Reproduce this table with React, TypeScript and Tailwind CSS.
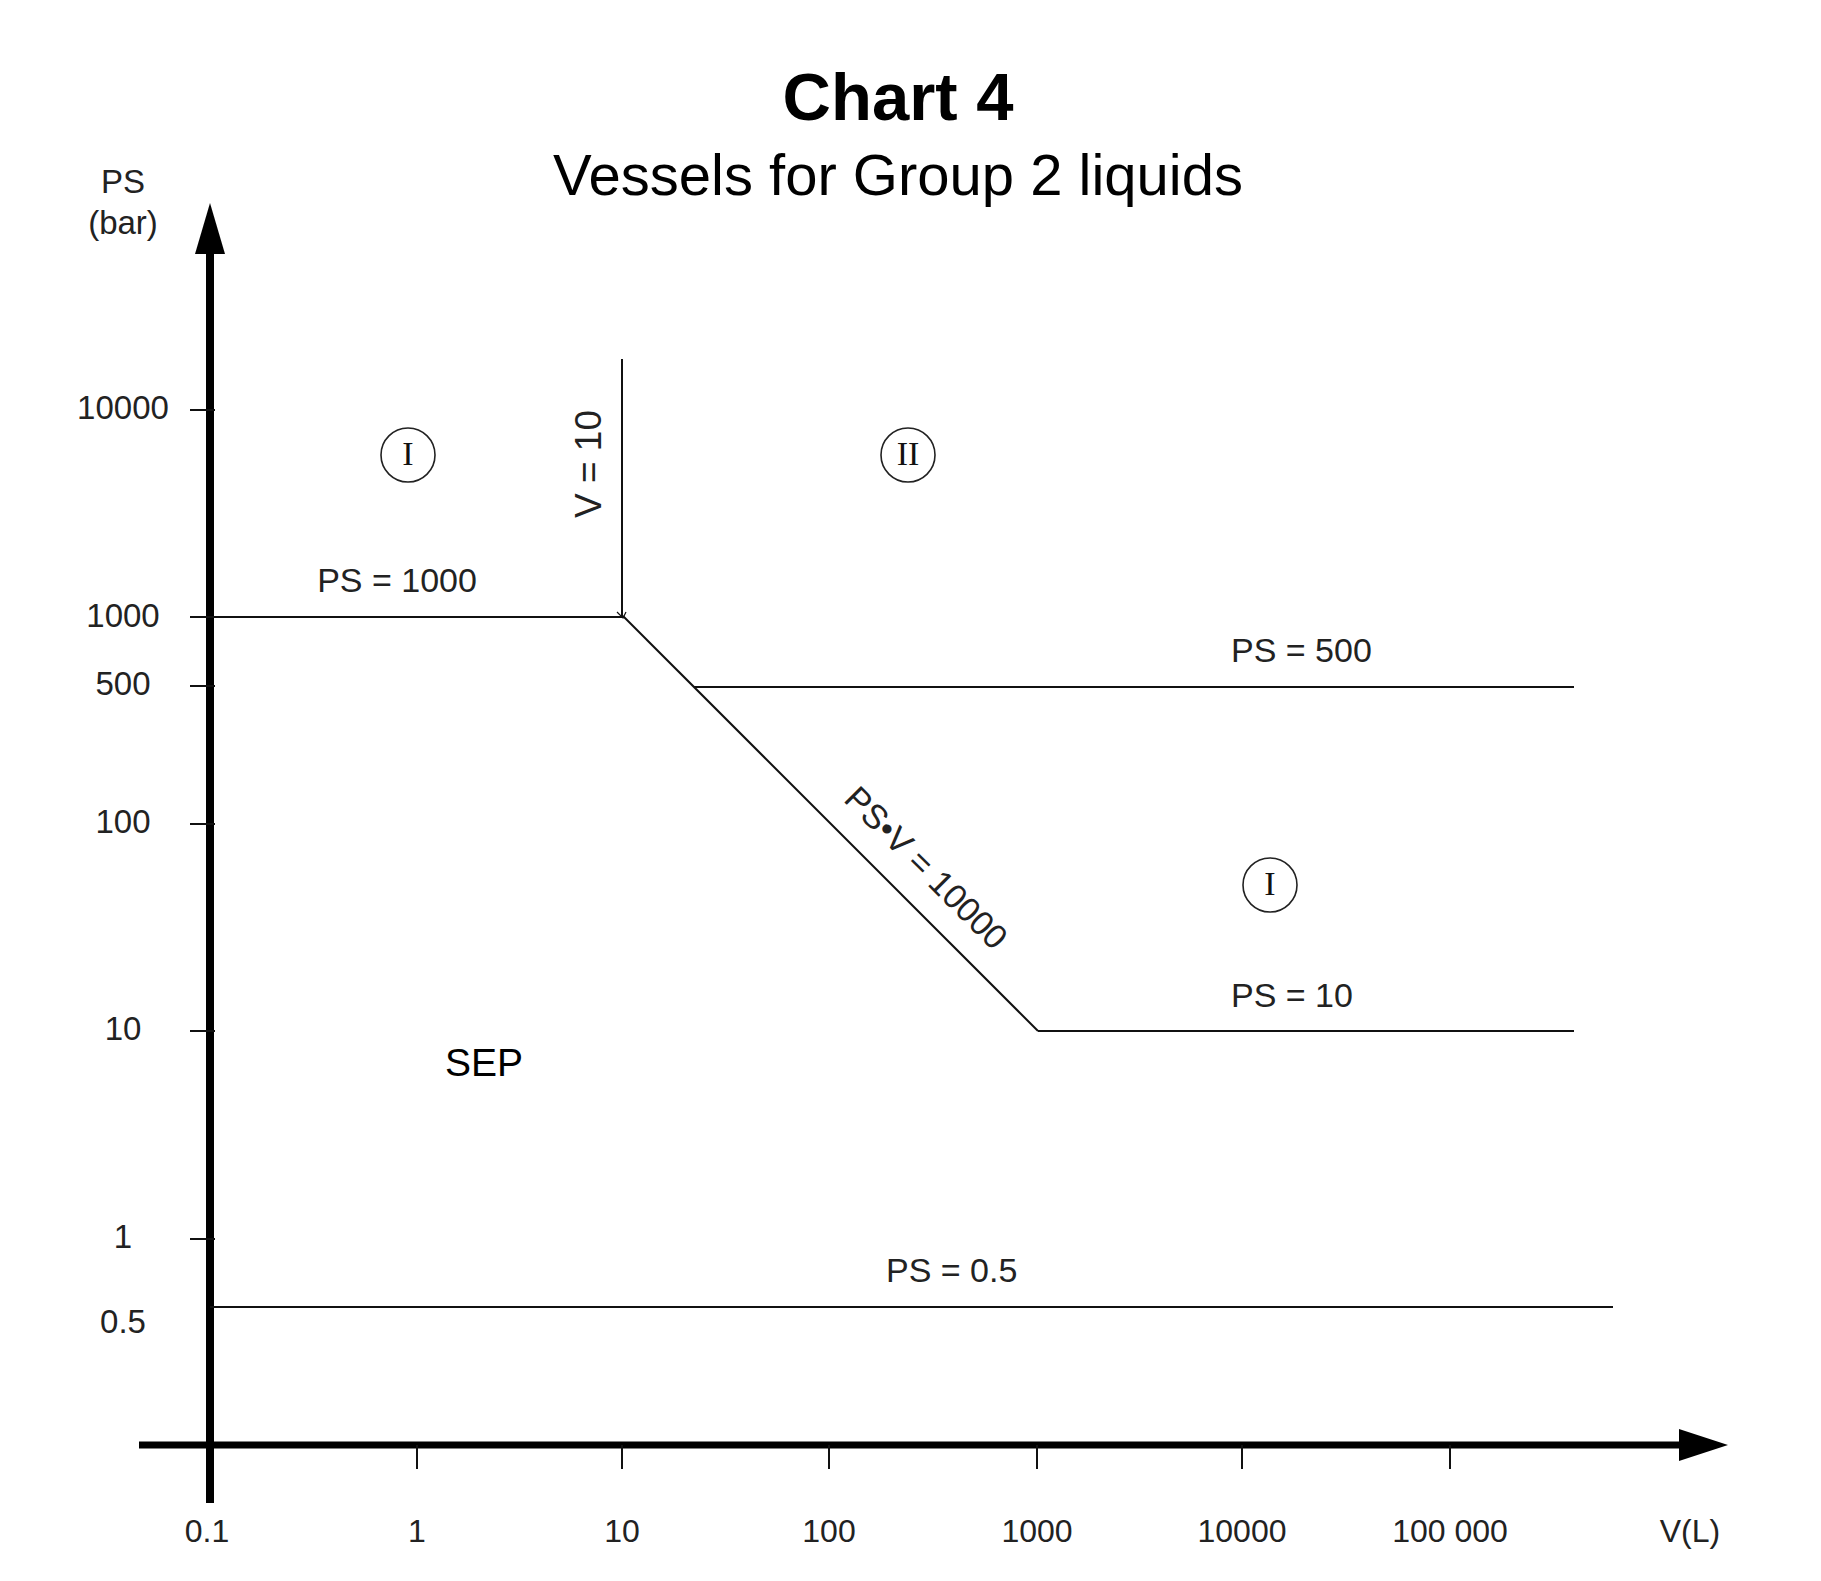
// Chart 4 – Vessels for Group 2 liquids (PED category chart)

const yTicks = [
  { y: 410, label: '10000', base: 419 },
  { y: 617, label: '1000', base: 627 },
  { y: 686, label: '500', base: 695 },
  { y: 824, label: '100', base: 833 },
  { y: 1031, label: '10', base: 1040 },
  { y: 1239, label: '1', base: 1248 },
];

const xTicks = [
  { x: 417, label: '1' },
  { x: 622, label: '10' },
  { x: 829, label: '100' },
  { x: 1037, label: '1000' },
  { x: 1242, label: '10000' },
  { x: 1450, label: '100 000' },
];

// boundary lines of the categories
const lines = [
  { x1: 210, y1: 617, x2: 623, y2: 617 }, // PS = 1000
  { x1: 622, y1: 359, x2: 622, y2: 617 }, // V = 10
  { x1: 623, y1: 616, x2: 1038, y2: 1031 }, // PS·V = 10000
  { x1: 694, y1: 687, x2: 1574, y2: 687 }, // PS = 500
  { x1: 1038, y1: 1031, x2: 1574, y2: 1031 }, // PS = 10
  { x1: 210, y1: 1307, x2: 1613, y2: 1307 }, // PS = 0.5
];

const categories = [
  { cx: 408, cy: 455, label: 'I' },
  { cx: 908, cy: 455, label: 'II' },
  { cx: 1270, cy: 885, label: 'I' },
];

export default function App() {
  return (
    <div className="relative w-[1821px] h-[1581px] bg-white text-black font-['Liberation_Sans',Arial,sans-serif]">
      {/* Titulo */}
      <div className="w-[1796px] flex flex-col items-center pt-[63px]">
        <h1 className="text-[67px] leading-none font-bold">Chart 4</h1>
        <h2 className="mt-[16px] text-[58px] leading-none">Vessels for Group 2 liquids</h2>
      </div>

      {/* Grafico */}
      <svg className="absolute inset-0" width="1821" height="1581" viewBox="0 0 1821 1581">
        {/* ejes */}
        <line x1="210" y1="250" x2="210" y2="1503" stroke="#000" strokeWidth="8" />
        <polygon points="210,203 195,254 225,254" fill="#000" />
        <line x1="139" y1="1445" x2="1682" y2="1445" stroke="#000" strokeWidth="7" />
        <polygon points="1728,1445 1679,1429 1679,1461" fill="#000" />

        {/* marcas del eje Y */}
        {yTicks.map(t => (
          <g key={t.label}>
            <line x1="190" y1={t.y} x2="215" y2={t.y} stroke="#111" strokeWidth="2" />
            <text x="123" y={t.base} textAnchor="middle" fontSize="33" fill="#222">{t.label}</text>
          </g>
        ))}
        <text x="123" y="1333" textAnchor="middle" fontSize="33" fill="#222">0.5</text>
        <text x="123" y="193" textAnchor="middle" fontSize="33" fill="#222">PS</text>
        <text x="123" y="234" textAnchor="middle" fontSize="33" fill="#222">(bar)</text>

        {/* marcas del eje X */}
        <text x="207" y="1542" textAnchor="middle" fontSize="32" fill="#222">0.1</text>
        {xTicks.map(t => (
          <g key={t.label}>
            <line x1={t.x} y1="1445" x2={t.x} y2="1469" stroke="#111" strokeWidth="2" />
            <text x={t.x} y="1542" textAnchor="middle" fontSize="32" fill="#222">{t.label}</text>
          </g>
        ))}
        <text x="1690" y="1542" textAnchor="middle" fontSize="32" fill="#222">V(L)</text>

        {/* limites */}
        {lines.map((l, i) => (
          <line key={i} x1={l.x1} y1={l.y1} x2={l.x2} y2={l.y2} stroke="#111" strokeWidth="2" />
        ))}
        {/* pequeña marca en la esquina V = 10 / PS = 1000 */}
        <path d="M617 612 L623 618 L626 612" fill="none" stroke="#111" strokeWidth="1.2" />

        {/* etiquetas de las lineas */}
        <text x="397" y="592" textAnchor="middle" fontSize="34" fill="#222">PS = 1000</text>
        <text x="1231" y="662" fontSize="34" fill="#222">PS = 500</text>
        <text x="1231" y="1007" fontSize="34" fill="#222">PS = 10</text>
        <text x="886" y="1282" fontSize="34" fill="#222">PS = 0.5</text>
        <text x="601" y="464" textAnchor="middle" fontSize="37" fill="#222" transform="rotate(-90 601 464)">V = 10</text>
        <text x="918" y="876" textAnchor="middle" fontSize="34" fill="#222" transform="rotate(45 918 876)">PS•V = 10000</text>
        <text x="445" y="1076" fontSize="39" fill="#000">SEP</text>

        {/* categorias */}
        {categories.map((c, i) => (
          <g key={i}>
            <circle cx={c.cx} cy={c.cy} r="27" fill="none" stroke="#222" strokeWidth="1.6" />
            <text x={c.cx} y={c.cy + 10} textAnchor="middle" fontSize="34" fill="#111" className="font-['Liberation_Serif',serif]">{c.label}</text>
          </g>
        ))}
      </svg>
    </div>
  );
}
